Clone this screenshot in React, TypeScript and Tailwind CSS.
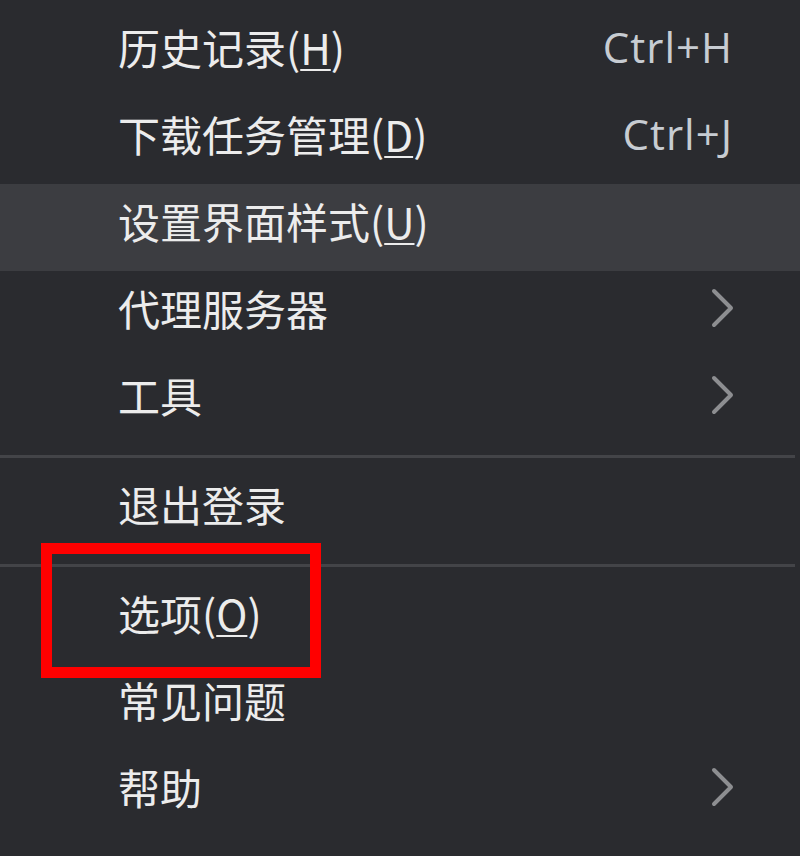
import React from 'react';

type MenuItem =
  | { type: 'item'; label: string; key?: string; shortcut?: string; submenu?: boolean; active?: boolean }
  | { type: 'separator' };

const items: MenuItem[] = [
  { type: 'item', label: '历史记录', key: 'H', shortcut: 'Ctrl+H' },
  { type: 'item', label: '下载任务管理', key: 'D', shortcut: 'Ctrl+J' },
  { type: 'item', label: '设置界面样式', key: 'U', active: true },
  { type: 'item', label: '代理服务器', submenu: true },
  { type: 'item', label: '工具', submenu: true },
  { type: 'separator' },
  { type: 'item', label: '退出登录' },
  { type: 'separator' },
  { type: 'item', label: '选项', key: 'O' },
  { type: 'item', label: '常见问题' },
  { type: 'item', label: '帮助', submenu: true },
];

function Chevron() {
  return (
    <svg width="24" height="40" viewBox="0 0 24 40" className="block">
      <polyline
        points="3,3 20,20 3,37"
        fill="none"
        stroke="#8d8e91"
        strokeWidth="4"
        strokeLinecap="round"
        strokeLinejoin="round"
      />
    </svg>
  );
}

export default function App() {
  return (
    <div
      className="relative w-[800px] h-[856px] overflow-hidden bg-[#2a2b2f] pt-[10px]"
      style={{ fontFamily: '"Noto Sans CJK SC", "Noto Sans", sans-serif' }}
    >
      {items.map((item, i) => {
        if (item.type === 'separator') {
          return <div key={i} className="mt-[10px] mb-[9px] h-[3px] w-[795px] bg-[#434448]" />;
        }
        return (
          <div
            key={i}
            className={`flex items-center h-[87px] pl-[118px] pr-[67px] pb-[13px] ${item.active ? 'bg-[#3c3d41]' : ''}`}
          >
            <span className="flex-1 text-[42px] leading-none text-[#ececec]">
              {item.label}
              {item.key && (
                <>
                  (<u className="underline-offset-[4px] decoration-[2px]">{item.key}</u>)
                </>
              )}
            </span>
            {item.shortcut && (
              <span
                className="text-[42px] leading-none text-[#c7ccd2] tracking-[1px]"
                style={{ fontFamily: '"Open Sans", "Liberation Sans", sans-serif' }}
              >
                {item.shortcut}
              </span>
            )}
            {item.submenu && (
              <span className="-mr-[2px]">
                <Chevron />
              </span>
            )}
          </div>
        );
      })}

      {/* red highlight annotation */}
      <div className="absolute left-[41px] top-[543px] w-[280px] h-[135px] border-[11px] border-[#ff0000]" />
    </div>
  );
}
